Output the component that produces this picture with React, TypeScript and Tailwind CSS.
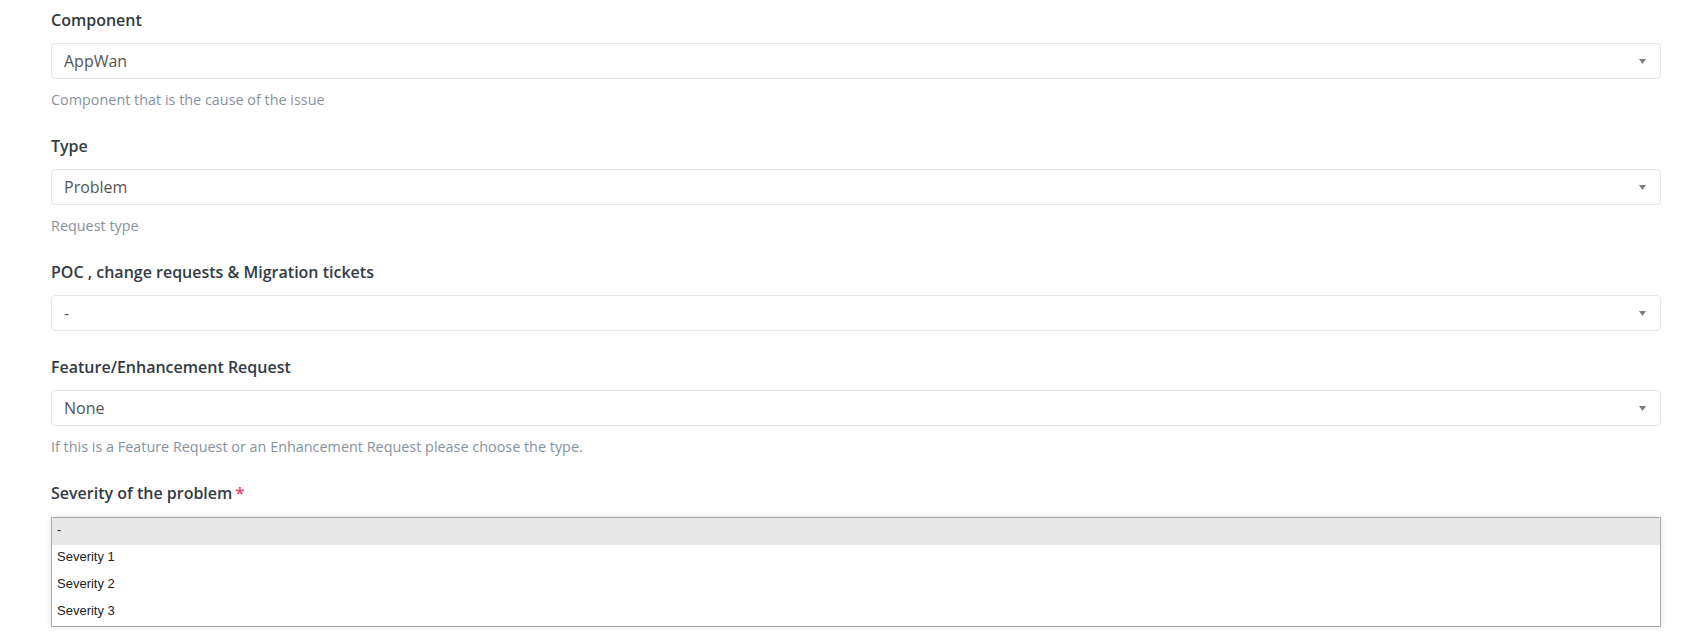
import React from 'react';

type Field = {
  label: string;
  value: string;
  help?: string;
};

const fields: Field[] = [
  { label: 'Component', value: 'AppWan', help: 'Component that is the cause of the issue' },
  { label: 'Type', value: 'Problem', help: 'Request type' },
  { label: 'POC , change requests & Migration tickets', value: '-' },
  {
    label: 'Feature/Enhancement Request',
    value: 'None',
    help: 'If this is a Feature Request or an Enhancement Request please choose the type.',
  },
];

const severities = ['-', 'Severity 1', 'Severity 2', 'Severity 3'];

const Caret = () => (
  <svg width="7" height="5" viewBox="0 0 7 5" className="shrink-0">
    <polygon points="0,0 7,0 3.5,5" fill="#7a7f86" />
  </svg>
);

const SelectField = ({ field }: { field: Field }) => (
  <div className="mb-[25px]">
    <label className="block text-[16px] leading-[22px] font-semibold text-[#333b44] mb-[12px]">
      {field.label}
    </label>
    <div className="h-[36px] flex items-center justify-between border border-[#e4e6e8] rounded-[4px] pl-[12px] pr-[14px] bg-white">
      <span className="text-[16px] text-[#555]">{field.value}</span>
      <Caret />
    </div>
    {field.help && (
      <p className="mt-[11px] text-[14.4px] leading-[20px] text-[#87929d]">{field.help}</p>
    )}
  </div>
);

export default function App() {
  return (
    <div
      className="w-[1707px] h-[636px] bg-white overflow-hidden"
      style={{ fontFamily: '"Open Sans", "Noto Sans", sans-serif' }}
    >
      <div className="w-[1610px] ml-[51px] pt-[9px]">
        {fields.map((f, i) => (
          <SelectField key={i} field={f} />
        ))}

        <label className="flex items-baseline gap-[3px] text-[16px] leading-[22px] font-semibold text-[#333b44] mb-[13px]">
          Severity of the problem
          <span className="text-[#e2416b] text-[17px]">*</span>
        </label>
        <div
          className="border border-[#a9a9a9] bg-white shadow-[0_0_6px_rgba(0,0,0,0.12)]"
          style={{ fontFamily: '"Liberation Sans", Arial, sans-serif' }}
        >
          {severities.map((s, i) => (
            <div
              key={s}
              className={`h-[27px] flex items-center pl-[5px] pb-[3px] text-[13px] text-[#222] ${
                i === 0 ? 'bg-[#e8e8e8]' : ''
              }`}
            >
              {s}
            </div>
          ))}
        </div>
      </div>
    </div>
  );
}
